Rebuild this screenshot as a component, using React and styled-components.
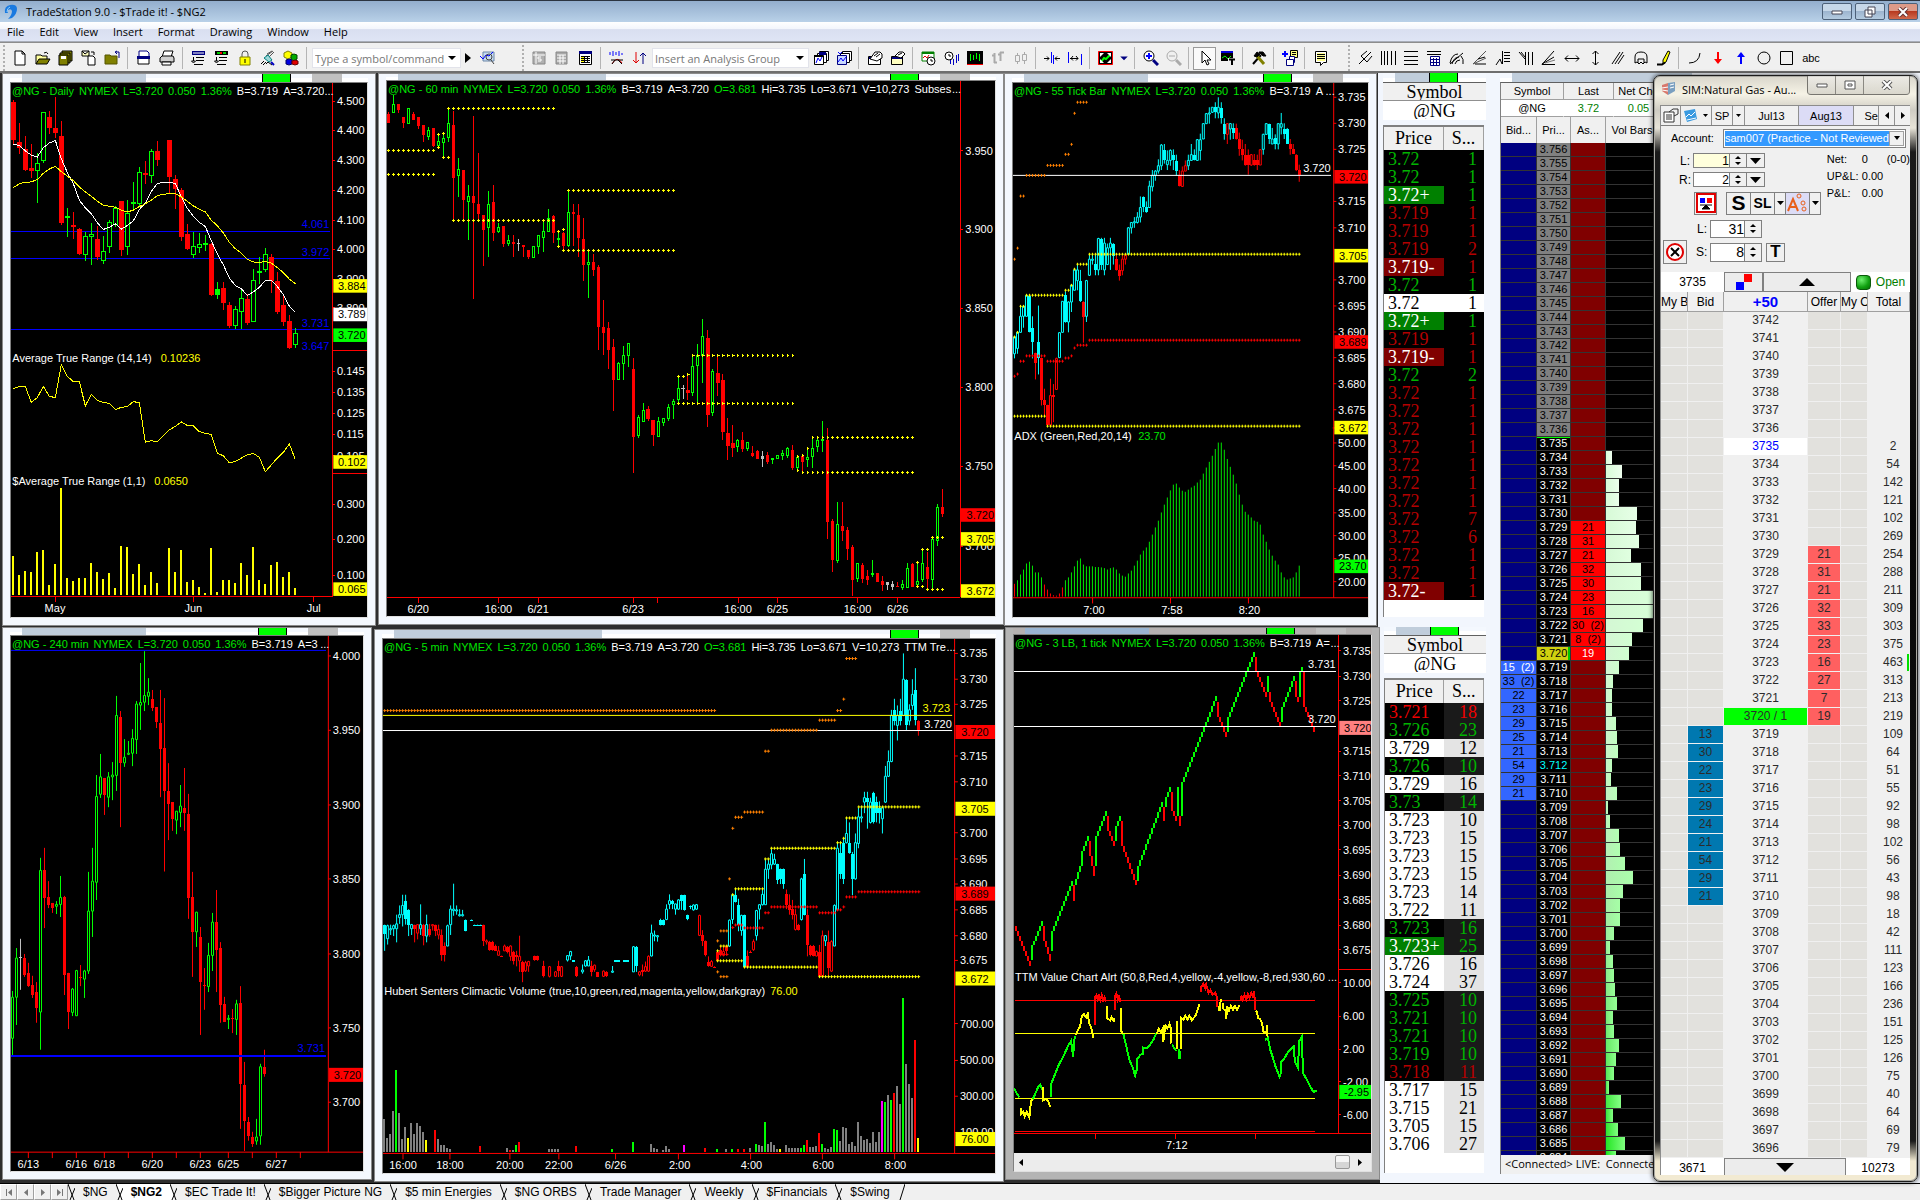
import React from 'react';
import styled, { createGlobalStyle } from 'styled-components';

const GlobalStyle = createGlobalStyle`
  * {
    box-sizing: border-box;
  }

  body {
    margin: 0;
    overflow: hidden;
    background: #f0f0f0;
    font-family: "Liberation Sans", Arial, sans-serif;
    font-size: 11px;
    color: #000;
  }

  button, input, select {
    font-family: inherit;
    font-size: inherit;
    color: inherit;
    margin: 0;
    padding: 0;
    border-radius: 0;
  }

  table {
    border-collapse: separate;
    border-spacing: 0;
    table-layout: fixed;
    width: 100%;
  }

  th, td {
    padding: 0;
    font-weight: normal;
    overflow: hidden;
    white-space: pre;
  }
`;

const Page = styled.div`
  height: 100vh;
  display: flex;
  flex-direction: column;
  position: relative;
`;

/* ---------- title bar and menu ---------- */

const TitleBar = styled.header`
  height: 22px;
  flex: none;
  display: flex;
  align-items: center;
  gap: 8px;
  padding: 0 2px 0 4px;
  border-top: 1px solid #2b3440;
  background: linear-gradient(#93aecd, #b9d1e8);
  font-family: "Open Sans", "Noto Sans", sans-serif;
  font-size: 11px;
`;

const TitleText = styled.h1`
  margin: 0;
  flex: 1;
  font-size: 11px;
  font-weight: normal;
`;

const CaptionButton = styled.button`
  width: 30px;
  height: 17px;
  margin-left: -6px;
  display: flex;
  align-items: center;
  justify-content: center;
  border: 1px solid #4c6078;
  border-radius: 2px;
  background: ${p => (p.$close ? 'linear-gradient(#dd9a88 45%, #b83a20 50%, #d0694c)' : 'linear-gradient(#c6d7e8 45%, #9db5cf 50%, #b4cbe0)')};

  & + & {
    margin-left: -5px;
  }
`;

const MenuBar = styled.nav`
  height: 20px;
  flex: none;
  display: flex;
  gap: 15px;
  padding-left: 7px;
  background: linear-gradient(#fff, #f3f6fc 35%, #d9dff0 40%, #dfe5f5);
  border-bottom: 1px solid #a8adb8;
  font-family: "Open Sans", "Noto Sans", sans-serif;
`;

const MenuItem = styled.button`
  border: 0;
  background: none;
  font-size: 11px;
`;

/* ---------- toolbar ---------- */

const ToolBar = styled.div`
  height: 31px;
  flex: none;
  display: flex;
  align-items: center;
  padding: 2px 0 0 2px;
  background: #f0f0f0;
  border-top: 1px solid #8c8c8c;
  border-bottom: 2px solid #6e6e6e;
`;

const Tool = styled.button`
  width: ${p => (p.$narrow ? '14px' : p.$wide ? '26px' : '23px')};
  height: 23px;
  flex: none;
  display: flex;
  align-items: center;
  justify-content: center;
  border: 1px solid ${p => (p.$active ? '#9a9a9a' : 'transparent')};
  background: ${p => (p.$active ? '#fafafa' : 'none')};
`;

const Sep = styled.span`
  width: 1px;
  height: 22px;
  flex: none;
  margin: 0 4px 0 ${p => (p.$loose ? '4px' : '3px')};
  background: #b4b4b4;
`;

const Grip = styled.span`
  width: 0;
  height: 26px;
  flex: none;
  margin: 0 3px 0 ${p => p.$before || 3}px;
  border-left: 2px dotted #b0b0b0;
`;

const Combo = styled.span`
  width: ${p => p.$width}px;
  height: 20px;
  flex: none;
  margin-left: 1px;
  display: flex;
  align-items: center;
  background: #fff;
  border: 1px solid #e2e3ea;
  color: #777;

  input {
    flex: 1;
    min-width: 0;
    padding-left: 2px;
    border: 0;
    background: none;
    font-family: "Open Sans", "Noto Sans", sans-serif;
  }

  input::placeholder {
    color: #777;
    opacity: 1;
  }
`;

const ICONS = {
  blank: [['M3 1h7l3 3v11h-10z M10 1v3h3', '#fff', '#000']],
  open: [['M1 14V5h5l1 1h5v3', '#ffff9c', '#000'], ['M1 14l3-5h11l-3 5z', '#808000', '#000'], ['M9 3q3-2 4 1', 'none', '#000']],
  saveAll: [['M4 1h10v10h-10z', '#808000', '#000'], ['M2 3h10v10h-10z', '#808000', '#000'], ['M1 5h9v10h-9z', '#808000', '#000'], ['M3 6h5v3h-5z', '#fff', 'none']],
  mail: [['M1 1h7v5h-7z M1 1l3 3 4-3', '#ffffc0', '#000'], ['M7 6h5l2 2v7h-7z', '#fff', '#000'], ['M10 2h3v3', 'none', '#000']],
  folder: [['M1 5h5l1 1h6v8h-12z', '#808000', '#555500'], ['M15 8V2h-3m1-1l-2 1 2 2', 'none', '#000080']],
  printPreview: [['M3 1h8l2 2v6h-10z', '#fff', '#000080'], ['M1 6h13v3h-13z', '#000080', 'none'], ['M2 9v5h11v-5', '#fff', '#000']],
  print: [['M5 1h9l-2 6h-9z', '#fff', '#000'], ['M1 8l2-2h11l1 2v4h-14z', '#d0d0d0', '#000'], ['M3 12h9v3h-9z', '#fff', '#000']],
  rows: [['M1 1h13v4h-13z', '#000080', 'none'], ['M2 3h11', 'none', '#fff'], ['M5 7.5h8 M5 10.5h8 M3 14.5h9 M2.5 7v4h-2l2 2 2-2h-2', 'none', '#000']],
  rowsColor: [['M1 1h13v4h-13z', '#000', 'none'], ['M3 2h3v2h-3z M9 2h3v2h-3z', '#0c0', 'none'], ['M6 2h2v2h-2z', '#f00', 'none'], ['M5 7.5h8 M5 10.5h8 M3 14.5h9 M2.5 7v4h-2l2 2 2-2h-2', 'none', '#000']],
  lock: [['M5 7V4q0-3 3-3t3 3v3', 'none', '#555'], ['M3 7h10v8h-10z', '#ffff00', '#808000'], ['M8 9v4', 'none', '#000']],
  scan: [['M6 6l7-5 M8 8l6-6 M7 4l5-3', 'none', '#555'], ['M1 14l3-3 M3 15l3-3 M6 14l2-2 4 3', 'none', '#000'], ['M4 8l4-3 4 5-3 2z', '#9fd8d8', '#008080'], ['M11 12l3 3', 'none', '#0000c0', 2]],
  cubes: [['M1 3l4-2 4 2v4l-4 2-4-2z', '#ffff00', '#808000'], ['M8 5l3-1 3 1v4l-3 2-3-2z', '#0a0', '#040'], ['M3 10l3-1 3 1v4l-3 1-3-1z', '#0000e0', '#006'], ['M9 11l3-1 3 1v3l-3 1-3-1z', '#e00000', '#600']],
  chartFind: [['M4 11V2h11v9z', '#c8dcf0', '#6a86a8'], ['M1 6l3 3 3-4 3 1 4-4', 'none', '#00f'], ['M7 7a3 3 0 1 0 6 0a3 3 0 1 0-6 0 M12 10l3 4', 'none', '#444']],
  money: [['M2 2h12v12h-12z', '#b0b0b0', '#888'], ['M2 5h12 M5 2v12 M10 7h-3v2h3v2h-3', 'none', '#fff']],
  calc: [['M2 2h11v12h-11z', '#a8a8a8', '#888'], ['M3 5h9 M3 8h9 M3 11h9 M6 5v9 M9 5v9', 'none', '#fff']],
  table: [['M2.5 1.5h12v13h-12z', '#fff', '#000'], ['M2 1h13v3h-13z', '#000080', 'none'], ['M4 6h3v7h-3z', '#ffff00', 'none'], ['M4 6.5h9 M4 8.5h9 M4 10.5h9 M4 12.5h9 M7.5 6v7 M10.5 6v7', 'none', '#000']],
  analysis: [['M1 5V2 M4 6V1 M7 5V2 M10 6V1 M13 5V3', 'none', '#00f'], ['M3 14q5-9 10-1', 'none', '#e00000'], ['M2 10l12 0 M3 14l3-4 M9 10l4 4', 'none', '#000']],
  updown: [['M4 2v11m-3-3l3 3 3-3', 'none', '#e00000'], ['M11 14V3m-3 3l3-3 3 3', 'none', '#000080']],
  dice: [['M6.5 1.5h9v9h-9z', '#fff', '#000'], ['M4.5 3.5h9v9h-9z', '#fff', '#000'], ['M1.5 5.5h9v9h-9z', '#fff', '#000'], ['M3 13l2-5 2 3 2-4', 'none', '#00f'], ['M6 2h7v3h-7z', '#000080', 'none'], ['M1 5h9v2h-9z', '#000', 'none']],
  sheets: [['M6.5 1.5h9v9h-9z', '#fff', '#000'], ['M4.5 3.5h9v9h-9z', '#fff', '#000'], ['M1.5 5.5h9v9h-9z', '#c9d8ff', '#000080'], ['M2 12l3-4 2 3 3-4', 'none', '#00f'], ['M2 2l2 2 2-2', 'none', '#00f']],
  hand: [['M1.5 6.5h12v8h-12z', '#fff', '#000'], ['M2 7h11v2h-11z', '#000080', 'none'], ['M3 9l5-7h5l2 2v4l-5 3z', '#fff', '#000'], ['M7 6l4-3 M9 7l4-3', 'none', '#000']],
  handBook: [['M1.5 6.5h11v8h-11z', '#ffffc0', '#000'], ['M2 7h10v2h-10z', '#000080', 'none'], ['M5 6l4-4h4l2 2-4 4z', '#fff', '#000'], ['M8 5l4-2', 'none', '#000']],
  chartClock: [['M1 2h12v9h-12z', '#fff', '#008000'], ['M1 2h12v2h-12z', '#008000', 'none'], ['M2 8l2-2 2 2 2-3', 'none', '#e00000'], ['M6 11a4 4 0 1 0 8 0a4 4 0 1 0-8 0', '#fff', '#000'], ['M10 9v2h2', 'none', '#000']],
  clockWave: [['M1 6a4 4 0 1 0 8 0a4 4 0 1 0-8 0 M5 4v2h2', '#fff', '#000'], ['M6.5 14V10 M9.5 15V9 M12.5 13V5 M14.5 11V4', 'none', '#0000c0']],
  bars: [['M0 1h16v13h-16z', '#000', 'none'], ['M3.5 4v7 M6.5 5v5 M9.5 3v6 M12.5 4v7', 'none', '#00ff00'], ['M0 14.5h16', 'none', '#f00']],
  greyBars: [['M4.5 3v10 M4 5.5h-2 M4 12.5h3 M10.5 2v9 M10 4.5h-2 M10 2.5h4', 'none', '#aaa', 2]],
  greyCandles: [['M4.5 3v11 M11.5 2v12', 'none', '#aaa'], ['M2.5 5.5h4v6h-4z M9.5 4.5h4v6h-4z', '#f0f0f0', '#aaa']],
  squeeze: [['M0 8.5h5m-2-2l2 2-2 2 M16 8.5h-5m2-2l-2 2 2 2', 'none', '#000'], ['M7.5 2v11 M9.5 5v9', 'none', '#00f']],
  widen: [['M3 8.5h8 M6 6l-2 2.5 2 2 M9 6l2 2.5-2 2', 'none', '#000'], ['M1.5 2v11 M14.5 4v11', 'none', '#00f']],
  move: [['M0.5 1.5h14v13h-14z', '#000', '#f00'], ['M3 12l3-4 2 1 4-4', 'none', '#0f0', 2], ['M2 3h4l-4 4z M13 3v4l-4-4z M2 13v-4l4 4z M13 13h-4l4-4z', '#fff', 'none']],
  zoomIn: [['M1 6a5 5 0 1 0 10 0a5 5 0 1 0-10 0', '#fff', '#000'], ['M6 3v6 M3 6h6', 'none', '#00f', 2], ['M10 10l5 5', 'none', '#000080', 3]],
  zoomOut: [['M1 6a5 5 0 1 0 10 0a5 5 0 1 0-10 0 M3 6h6', 'none', '#aaa'], ['M10 10l5 5', 'none', '#aaa', 3]],
  pointer: [['M5 1v12l3-3 2 5 2-1-2-4h4z', '#fff', '#000']],
  textChart: [['M1 2h12v9h-12z', '#000', 'none'], ['M1 1h12v2h-12z', '#0000e0', 'none'], ['M2 8l3-2 3 3 3-3', 'none', '#0f0'], ['M8 8h8v7h-8z', '#f0f0f0', 'none'], ['M9 9.5h6 M12 9v6', 'none', '#000', 2]],
  hammers: [['M2 14l8-9', 'none', '#000', 2], ['M13 14L6 6', 'none', '#808000', 3], ['M8 2h4l3 4-3 0z M3 6l3-4 3 2-3 3z', '#000', '#000']],
  plusSheets: [['M0 4h6 M3 1v6', 'none', '#00f', 2], ['M8.5 0.5h7v7h-7z', '#ffff80', '#000'], ['M10 2.5h4 M10 4.5h4', 'none', '#000'], ['M7.5 6.5h5v6h-5z', '#fff', '#000080'], ['M4.5 9.5h7v6h-7z', '#fff', '#000080']],
  note: [['M2.5 1.5h11v11h-3l-3 3v-3h-5z', '#fff', '#000'], ['M4 3h8v8h-8z', '#ffff90', 'none'], ['M4 4.5h8 M4 6.5h8 M4 8.5h8', 'none', '#000']],
  pitchfork: [['M2 14l5-5 M4 6l6 6 M4 6l6-5 M7 9l7-7 M10 12l5-6', 'none', '#000']],
  vlines: [['M1.5 1v14 M4.5 1v14 M7.5 1v14 M11.5 1v14 M15.5 1v14', 'none', '#000']],
  hlines: [['M1 1.5h14 M1 6.5h14 M1 10.5h14 M1 14.5h14', 'none', '#000']],
  fibBox: [['M1 1.5h14 M1 4.5h14', 'none', '#000'], ['M4.5 6.5h9v9h-9z', '#fff', '#000080'], ['M5 9.5h8 M5 12.5h8 M7.5 8v7 M10.5 8v7', 'none', '#000080']],
  arcs: [['M1 13q2-9 8-9 M3 14q2-7 7-7 M6 14q1-4 5-4 M1 14l13-11 M12 6q3 3 2 8', 'none', '#000']],
  fan: [['M1 14L14 1 M1 14l13-6', 'none', '#555'], ['M3 14h11 M6 9l7-2', 'none', '#000']],
  fanLines: [['M1 15l4-6 2 5 M7.5 1v13', 'none', '#000'], ['M9 2.5h6 M9 5.5h6 M9 8.5h6 M9 11.5h6', 'none', '#000']],
  timeLines: [['M1 2l6 7 M7.5 2v13 M10.5 2v13 M14.5 2v13 M3 2l4 5', 'none', '#000']],
  angle: [['M1 14.5L13 1 M1 14.5h13 M1 14l12-7', 'none', '#000'], ['M4 13l10-3', 'none', '#777']],
  hArrow: [['M1 8.5h14 M4 5.5l-3 3 3 3 M12 5.5l3 3-3 3', 'none', '#000']],
  vArrow: [['M8.5 1v14 M5.5 4l3-3 3 3 M5.5 12l3 3 3-3', 'none', '#000']],
  parallel: [['M2 14L10 2 M5 14L13 2 M8 14l6-9', 'none', '#000']],
  head: [['M2 13V7q0-5 6-5t6 5v6l-2-1-2 2-2-2-2 2-2-2z M5 13V9h6v4', 'none', '#000']],
  pencil: [['M7 10L12 1l2 1-4 10-3 2z', '#ffff00', '#000'], ['M1 14.5h5l3-2', 'none', '#000', 2]],
  arc: [['M2 13q10 0 11-10', 'none', '#000']],
  down: [['M8 2v9', 'none', '#f00', 2], ['M4 9h8l-4 5z', '#f00', 'none']],
  up: [['M8 14V6', 'none', '#00f', 2], ['M4 7h8l-4-5z', '#00f', 'none']],
  ellipse: [['M2 8a6 6 0 1 0 12 0a6 6 0 1 0-12 0', 'none', '#000']],
  rect: [['M1.5 1.5h12v13h-12z', 'none', '#000']],
  caret: [['M4 6h8l-4 4z', '#000', 'none']],
  caretBlue: [['M3 6h10l-5 5z', '#000080', 'none']],
  play: [['M5 3v10l6-5z', '#000', 'none']],
};

const Icon = ({ name, size = 16 }) => (
  <svg width={size} height={size} viewBox="0 0 16 16" aria-hidden="true" style={{ flex: 'none' }}>
    {ICONS[name].map(([d, fill, stroke, w], i) => (
      <path key={i} d={d} fill={fill} stroke={stroke} strokeWidth={w || 1} />
    ))}
  </svg>
);

const TOOL_GROUPS_LEFT = ['blank open saveAll mail folder', 'printPreview print', 'rows rowsColor lock scan cubes'];
const TOOL_GROUPS_MID = [
  'dice sheets', 'hand handBook', 'chartClock clockWave bars greyBars greyCandles', 'squeeze widen',
  'move caretBlue', 'zoomIn zoomOut', 'pointer textChart', 'hammers', 'plusSheets', 'note',
];
const DRAWING_TOOLS = [
  'pitchfork vlines hlines fibBox arcs fan fanLines timeLines angle hArrow vArrow parallel head pencil',
  'arc down up ellipse rect',
];

const ToolGroup = ({ names }) => names.split(' ').map(n => (
  <Tool key={n} aria-label={n} $narrow={n === 'caretBlue'} $active={n === 'pointer'}>
    <Icon name={n} size={n === 'caretBlue' ? 12 : 16} />
  </Tool>
));

const Toolbar = () => (
  <ToolBar>
    <Grip $before={1} />
    {TOOL_GROUPS_LEFT.map(g => <React.Fragment key={g}><ToolGroup names={g} /><Sep $loose /></React.Fragment>)}
    <Combo $width={149}>
      <input aria-label="Symbol or command" placeholder="Type a symbol/command" />
      <Icon name="caret" />
    </Combo>
    <Tool $narrow aria-label="Run"><Icon name="play" /></Tool>
    <ToolGroup names="chartFind" />
    <Grip $before={24} />
    <ToolGroup names="money calc table" />
    <Sep $loose />
    <ToolGroup names="analysis updown" />
    <Combo $width={157}>
      <input aria-label="Analysis group" placeholder="Insert an Analysis Group" />
      <Icon name="caret" />
    </Combo>
    {TOOL_GROUPS_MID.map((g, i) => (
      <React.Fragment key={g}>{i > 0 && <Sep />}<ToolGroup names={g} /></React.Fragment>
    ))}
    <Grip $before={16} />
    <ToolGroup names={DRAWING_TOOLS[0]} />
    <Sep />
    <ToolGroup names={DRAWING_TOOLS[1]} />
    <Tool $wide>abc</Tool>
  </ToolBar>
);

/* ---------- child windows ---------- */

const Workspace = styled.main`
  flex: 1;
  min-height: 0;
  display: grid;
  grid-template-columns: minmax(0, 1fr) 428px;
  background: #2e2e2e;
`;

const Rows = styled.div`
  min-height: 0;
  display: grid;
  grid-template-rows: minmax(0, 554fr) minmax(0, 556fr);
`;

const WindowRow = styled.div`
  min-height: 0;
  display: grid;
  grid-template-rows: minmax(0, 1fr);
  grid-template-columns: ${p => p.$columns};
`;

const Frame = styled.section`
  min-width: 0;
  min-height: 0;
  margin: ${p => p.$margin || '0'};
  display: flex;
  flex-direction: column;
  padding: 0 7px 7px;
  border: 1px solid #8a8a8a;
  background: ${p => (p.$active ? '#b4b4b4' : '#f4f8fe')};
`;

const Strip = styled.div`
  height: ${p => p.$height}px;
  flex: none;
  display: flex;
  padding-left: 12px;
  background: ${p => (p.$active ? '#b4b0b0' : 'linear-gradient(#f4f8fe 50%, #fff 50%)')};
`;

const StripPart = styled.i`
  width: ${p => p.$w}px;
  flex: ${p => (p.$grow ? 1 : 'none')};
  background: ${p => p.$color || 'transparent'};
  border: solid #000;
  border-width: ${p => (p.$edged ? '0 1px' : '0')};
`;

const Well = styled.div`
  flex: 1;
  min-height: 0;
  display: flex;
  flex-direction: column;
  position: relative;
  border: 1px solid;
  border-color: #808080 #e0e0e0 #e0e0e0 #808080;
  background: ${p => p.$bg || '#000'};
  overflow: hidden;
`;

const ChartWindow = ({ margin, strip = 8, active, caption = 124, children }) => (
  <Frame $margin={margin} $active={active}>
    <Strip $height={strip} $active={active}>
      <StripPart $w={caption} $color={active ? '#99b4d1' : '#c0cddb'} />
      <StripPart $grow />
      <StripPart $w={29} $color="#00ff00" $edged />
      <StripPart $w={21} />
      <StripPart $w={30} $color="#c0c0c0" />
      <StripPart $w={26} />
    </Strip>
    <Well>{children}</Well>
  </Frame>
);

/* ---------- charts ---------- */

const Canvas = styled.svg`
  flex: 1;
  width: 100%;
  min-height: 0;
  display: block;

  path, line, polyline {
    vector-effect: non-scaling-stroke;
    fill: none;
    shape-rendering: crispEdges;
  }

  text {
    font-size: 11px;
    fill: #fff;
  }
`;

const ChartHeader = styled.div`
  position: absolute;
  top: 1px;
  left: 1px;
  width: ${p => p.$width}%;
  display: flex;
  line-height: 15px;
  white-space: nowrap;
  color: #fff;
`;

const HeaderItems = styled.div`
  flex: 0 1 auto;
  display: flex;
  gap: 5px;
  padding-right: 3px;
  overflow: hidden;
`;

const HeaderItem = styled.span`
  color: ${p => (p.$green ? '#00e400' : '#fff')};
`;

const RED = '#ff0000';
const LIME = '#00ff00';
const CYAN = '#00ffff';
const YELLOW = '#ffff00';
const ORANGE = '#ff8000';
const BLUE = '#0000ff';

const CANDLE_COLORS = { g: LIME, G: LIME, r: RED, h: RED, w: '#c0c0c0', c: CYAN, C: CYAN };
const HOLLOW = 'ghc';

// "hi top bottom low kind", one entry per bar
const parseCandles = (text, x0, step) => text.trim().split(/\s*,\s*/).map((row, i) => {
  const f = row.split(' ');
  const slot = f.length === 6 ? Math.round((Number(f.shift()) - x0) / step) : i;
  return { x: x0 + slot * step, hi: +f[0], top: +f[1], bot: Math.max(+f[2], +f[1] + 3), lo: +f[3], kind: f[4] };
}).filter(c => c.kind);

const Candles = ({ data, width, hollowWidth }) => data.map((c, i) => {
  const color = CANDLE_COLORS[c.kind];
  const hollow = HOLLOW.includes(c.kind);
  const w = hollow ? hollowWidth : width;
  return (
    <React.Fragment key={i}>
      <path d={`M${c.x} ${c.hi}V${c.lo}`} stroke={color} />
      <rect
        x={c.x - w / 2}
        y={c.top}
        width={w}
        height={c.bot - c.top}
        fill={hollow ? '#000' : color}
        stroke={hollow ? color : 'none'}
        vectorEffect="non-scaling-stroke"
        shapeRendering="crispEdges"
      />
    </React.Fragment>
  );
});

const Dots = ({ runs, x0 = 0, step, color }) => (
  <path
    stroke={color}
    d={runs.map(([a, b, y]) => {
      let d = '';
      for (let x = x0 + a; x <= x0 + b + 1; x += step) d += `M${x - 3} ${y}h7M${x} ${y - 4}v8`;
      return d;
    }).join('')}
  />
);

const series = (ys, x0, step) => ys.trim().split(' ').map((y, i) => `${x0 + i * step},${y}`).join(' ');

const BAR_COLORS = { g: LIME, r: RED, y: YELLOW, m: '#ff00ff', d: '#808080' };

// "top[colour][*count]" entries, "-" leaves a gap
const Bars = ({ text, x0, step, base, color, width = 1 }) => {
  const tops = text.trim().split(' ').flatMap(t => {
    const [v, n] = t.split('*');
    return Array(Number(n || 1)).fill(v);
  });
  return tops.map((t, i) => (t === '-' ? null : (
    <path key={i} d={`M${x0 + i * step} ${base}V${parseInt(t, 10)}`} stroke={BAR_COLORS[t.slice(-1)] || color} strokeWidth={width} />
  )));
};

const Chart = ({ view, axis, floor, scale = [], tags = [], times = [], ticks = [], notes = [], splits = [], header, floorTo, children }) => {
  const [vx, vy, vw, vh] = view;
  const px = x => `${((x - vx) / vw) * 100}%`;
  const py = y => `${((y - vy) / vh) * 100}%`;
  const right = vx + vw;
  return (
    <>
      <Canvas width="100%" height="100%">
        <svg viewBox={view.join(' ')} preserveAspectRatio="none" width="100%" height="100%">
          {children}
          <path stroke={RED} strokeWidth="1" d={`M${axis} ${vy}V${floor}M${vx} ${floor}H${floorTo || axis}`} />
          <path stroke={RED} d={scale.map(([, y]) => `M${axis} ${y}h8`).join('') + splits.map(y => `M${axis - 3} ${y}H${right}`).join('')} />
          <path stroke={RED} d={ticks.map(x => `M${x} ${floor}v${16}`).join('')} />
        </svg>
        {scale.map(([t, y]) => <text key={t} x={px(axis + 13)} y={py(y)} dy="4">{t}</text>)}
        <svg viewBox={view.join(' ')} preserveAspectRatio="none" width="100%" height="100%">
          {tags.map(([t, y, c]) => <rect key={t} x={axis + 2} y={y - 19} width={right - axis} height="38" fill={c} />)}
        </svg>
        {tags.map(([t, y]) => <text key={t} x={px(axis + 16)} y={py(y)} dy="4" style={{ fill: '#000' }}>{t}</text>)}
        {times.map(([t, x, y]) => <text key={t + x} x={px(x)} y={py(y)} dy="4" textAnchor="middle">{t}</text>)}
        {notes.map(([t, x, y, c, a]) => <text key={t + y} x={px(x)} y={py(y)} dy="4" textAnchor={a} style={{ fill: c }}>{t}</text>)}
      </Canvas>
      <ChartHeader $width={((axis - vx) / vw) * 100}>
        <HeaderItems>
          {header.split('  ').map((t, i) => <HeaderItem key={t} $green={i < 5 || t.startsWith('O=')}>{t}</HeaderItem>)}
        </HeaderItems>
        <span>...</span>
      </ChartHeader>
    </>
  );
};

const scaleOf = (text) => text.trim().split(' ').map(p => p.split('@')).map(([t, y]) => [t, +y]);

const DAILY = `
84 90 195 208 r, 148 202 217 235 r, 184 221 279 283 r, 207 274 283 301 r, 233 261 281 372 g, 118 119 254 260 g,
115 132 162 179 r, 76 162 176 190 r, 142 185 427 434 r, 386 410 412 467 g, 398 434 440 473 r, 441 445 515 518 r,
452 466 517 535 g, 428 460 466 546 g, 437 473 523 531 r, 465 508 534 543 g, 420 426 494 513 g, 381 388 433 440 g,
367 367 503 520 r, 364 402 494 518 g, 313 371 373 389 g, 271 287 373 381 g, 254 288 293 319 r, 220 228 296 316 g,
198 227 251 269 r, -, 195 196 299 345 r, 293 305 333 389 r, 330 336 468 479 r, 431 459 501 504 r, 454 493 517 527 g,
456 488 497 513 g, 462 485 487 507 g, 484 487 629 633 r, 593 613 629 641 G, 593 610 651 672 r, 649 658 716 722 r,
661 670 716 726 g, 612 640 676 726 g, 626 641 707 713 r, 558 589 704 706 g, 524 564 566 599 g, 498 516 559 566 g,
515 524 590 624 r, 566 591 678 683 r, 631 658 706 717 r, 686 703 778 782 r, 722 737 769 778 g`;
const DAILY_FAST = '207 211 226 238 243 217 204 197 248 287 318 364 386 402 427 446 440 430 445 435 422 390 372 340 317 315 314 317 355 387 409 426 438 478 515 545 582 603 612 631 621 608 589 589 606 628 661 678';
const DAILY_SLOW = '329 318 314 313 306 289 277 269 284 297 309 327 341 353 367 378 381 384 392 397 392 382 374 364 351 348 345 346 355 367 380 389 397 420 436 456 482 500 512 530 537 538 536 540 553 567 585 598';
const DAILY_ATR = '891 886 886 930 917 885 913 917 824 857 872 872 940 907 925 930 933 950 944 942 928 931 1042 1037 1041 1024 1007 997 985 995 996 1012 1017 1020 1072 1080 1099 1096 1086 1077 1073 1084 1124 1105 1086 1070 1047 1090';
const DAILY_RANGE = '1361 1414 1403 1406 1350 1344 1442 1383 1170 1422 1431 1422 1422 1380 1406 1425 1408 1450 1333 1336 1411 1383 1442 1406 1436 - 1338 1406 1344 1434 1428 1448 1464 1338 1462 1428 1428 1436 1380 1414 1336 1428 1439 1386 1378 1420 1406 1450';

const DailyChart = () => (
  <Chart
    view={[33, 36, 1068, 1495]}
    axis={998}
    floor={1474}
    splits={[785, 1129]}
    header="@NG - Daily  NYMEX  L=3.720  0.050  1.36%  B=3.719  A=3.720"
    scale={scaleOf('4.500@87 4.400@168 4.300@252 4.200@336 4.100@420 4.000@501 3.900@585 3.800@665 0.145@843 0.135@902 0.125@961 0.115@1020 0.105@1079 0.300@1216 0.200@1313 0.100@1414')}
    tags={[['3.884', 604, YELLOW], ['3.789', 684, '#fff'], ['3.720', 742, LIME], ['0.102', 1097, YELLOW], ['0.065', 1453, YELLOW]]}
    times={[['May', 165, 1507], ['Jun', 580, 1507], ['Jul', 941, 1507]]}
    ticks={[166, 580, 941]}
    notes={[
      ['4.061', 988, 432, BLUE, 'end'], ['3.972', 988, 508, BLUE, 'end'], ['3.731', 988, 707, BLUE, 'end'],
      ['3.647', 988, 772, BLUE, 'end'],
      ['Average True Range (14,14)', 37, 807, '#fff'], ['0.10236', 482, 807, YELLOW],
      ['$Average True Range (1,1)', 37, 1151, '#fff'], ['0.0650', 463, 1151, YELLOW],
    ]}
  >
    <path stroke={BLUE} d="M33 452H990M33 527H990M33 726H990" />
    <Candles data={parseCandles(DAILY, 40.5, 18)} width={15} hollowWidth={12} />
    <polyline points={series(DAILY_FAST, 40, 18)} stroke="#fff" />
    <polyline points={series(DAILY_SLOW, 40, 18)} stroke={YELLOW} />
    <polyline points={series(DAILY_ATR, 40, 18)} stroke={YELLOW} />
    <Bars text={DAILY_RANGE} x0={39} step={18} base={1470} color={YELLOW} width={2} />
  </Chart>
);

const HOURLY = `
118 123 148 148 r, 68 96 118 120 g, 95 95 112 119 r, 132 132 147 161 r, 106 108 150 150 g, 116 123 140 140 r,
130 130 157 164 r, 154 154 181 201 r, 160 169 186 194 g, 161 163 212 214 r, 182 200 211 216 g, 178 192 203 245 g,
107 149 187 201 g, 115 154 301 420 r, 246 278 296 355 g, 278 278 364 420 r, 322 353 369 475 g, 129 353 371 641 r,
232 375 403 420 r, 406 406 447 548 r, 339 376 441 524 g, 322 370 455 479 r, 428 441 452 455 g, 437 437 487 494 r,
462 478 486 492 g, 462 482 486 523 r, 473 484 486 506 w, 490 490 495 524 r, 504 504 524 530 r, 493 493 525 525 g,
461 463 494 515 g, 421 452 469 510 g, 389 415 451 453 g, 406 409 455 483 r, 452 470 472 495 g, 452 455 493 500 r,
338 398 491 494 g, 376 398 402 492 r, 375 406 469 523 r, 413 473 545 590 r, 500 538 545 637 g, 516 538 559 576 r,
545 552 720 783 r, 644 720 735 797 r, 706 722 783 837 r, 753 776 867 955 r, 818 821 866 867 g, 773 800 822 868 g,
764 766 800 832 g, 806 837 1027 1128 r, 966 972 1022 1030 g, 932 953 985 986 g, 941 950 976 984 r, 980 980 1021 1053 r,
972 984 1027 1027 g, 974 975 986 998 g, 935 944 976 983 g, 921 928 937 977 g, 858 891 922 936 g, 882 890 892 921 w,
852 896 904 924 r, 800 829 903 912 g, 767 800 828 933 g, 697 746 800 876 g, 728 750 966 1000 r, 838 844 960 968 g,
800 849 876 912 r, 851 868 1013 1035 r, 974 1016 1053 1092 r, 993 1045 1057 1084 r, 1032 1037 1053 1070 g,
1014 1036 1060 1070 r, 1042 1043 1060 1068 g, 1052 1072 1081 1084 r, 1065 1067 1089 1089 r, 1066 1082 1088 1112 w,
1070 1078 1097 1103 r, 1086 1087 1091 1103 g, 1078 1079 1087 1089 g, 1064 1073 1078 1091 g, 1056 1059 1079 1087 g,
1050 1064 1113 1119 r, 1081 1084 1112 1122 g, 1078 1082 1097 1126 r, 1060 1085 1091 1112 g, 1030 1059 1083 1114 g,
1030 1036 1055 1070 g, 983 1034 1036 1070 g, 1002 1035 1266 1312 r, 1256 1264 1372 1406 r, 1210 1272 1374 1381 g,
1210 1277 1290 1320 r, 1279 1288 1340 1372 r, 1330 1337 1428 1473 r, 1380 1382 1423 1434 g, 1380 1386 1425 1437 r,
1400 1417 1427 1443 r, 1372 1409 1413 1420 g, 1408 1408 1433 1435 r, 1417 1431 1441 1459 r, 1434 1434 1441 1455 w,
1430 1440 1448 1455 w, 1434 1445 1449 1449 r, 1427 1440 1448 1455 g, 1380 1395 1448 1449 g, 1380 1382 1447 1447 r,
1378 1432 1442 1448 g, 1343 1382 1427 1434 g, 1350 1392 1425 1455 r, 1309 1316 1427 1455 g, 1215 1225 1318 1333 g,
1172 1224 1242 1252 r`;

const HOUR_STEP = 12.45;
const HOURLY_LEVELS = [
  [0, 9, 225], [0, 9, 292], [10, 10, 181], [11, 11, 178], [10, 10, 216], [11, 12, 245], [12, 33, 107], [13, 33, 421],
  [34, 34, 452], [35, 35, 447], [34, 34, 494], [36, 57, 338], [35, 57, 505], [58, 59, 858], [60, 60, 852], [61, 81, 799],
  [58, 81, 933], [82, 82, 1081], [83, 83, 1080], [84, 84, 1060], [85, 105, 1029], [82, 82, 1121], [83, 105, 1127],
  [106, 106, 1378], [107, 108, 1343], [109, 111, 1309], [106, 107, 1446], [108, 111, 1454],
].map(([a, b, y]) => [a * HOUR_STEP, b * HOUR_STEP, y]);

const HourChart = () => (
  <Chart
    view={[29, 30, 1517, 1499]}
    axis={1459}
    floor={1476}
    header="@NG - 60 min  NYMEX  L=3.720  0.050  1.36%  B=3.719  A=3.720  O=3.681  Hi=3.735  Lo=3.671  V=10,273  Subses"
    scale={scaleOf('3.950@225 3.900@446 3.850@667 3.800@888 3.750@1109 3.700@1334')}
    tags={[['3.720', 1246, RED], ['3.705', 1313, YELLOW], ['3.672', 1459, YELLOW]]}
    times={[['6/20', 107], ['16:00', 307], ['6/21', 406], ['6/23', 643], ['16:00', 905], ['6/25', 1003], ['16:00', 1203], ['6/26', 1303]].map(t => [...t, 1510])}
    ticks={[107, 307, 406, 643, 705, 905, 1003, 1203, 1303]}
  >
    <Candles data={parseCandles(HOURLY, 33, HOUR_STEP)} width={8} hollowWidth={5} />
    <Dots runs={HOURLY_LEVELS} x0={33} step={HOUR_STEP} color={YELLOW} />
  </Chart>
);

const TICKS55 = `
745 748 795 808 c, 735 735 780 795 c, 660 690 735 735 c, 660 662 690 722 c, 630 632 690 690 c, 632 632 735 735 C,
690 722 762 808 C, 792 793 822 867 r, 660 762 808 853 C, 806 806 925 940 r, 893 925 940 968 r, 938 938 995 997 r,
865 912 995 997 h, 880 912 912 987 r, 806 808 895 895 h, 735 736 806 806 c, 648 648 735 735 c, 620 630 706 708 C,
648 650 706 735 c, 600 603 650 678 c, 555 560 617 617 c, 545 560 590 617 c, 560 590 648 650 C, 648 650 692 764 r,
588 590 690 706 c, 516 530 575 577 c, 516 530 530 545 c, 516 543 560 575 C, 470 472 560 575 c, 470 472 547 560 C,
470 485 560 575 c, 486 498 545 545 c, 470 485 498 560 c, 485 486 520 545 C, 520 530 560 562 r, 545 560 576 590 r,
520 530 562 575 h, 516 518 530 545 h, 440 442 516 516 c, 427 427 442 458 c, 412 425 427 442 c, 398 412 427 430 c,
354 385 412 427 c, 354 355 385 398 C, 368 385 398 400 C, 310 325 385 385 c, 280 295 327 340 c, 280 283 295 310 c,
250 268 283 290 c, 207 210 268 280 c, 207 225 253 262 C, 225 253 265 280 c, 222 225 253 268 c, 222 237 253 280 C,
237 256 282 295 C, 280 295 326 326 r, 270 283 326 326 h, 253 268 283 283 h, 237 253 268 280 c, 207 237 253 253 c,
222 237 253 253 C, 193 195 253 253 c, 178 195 225 253 c, 149 150 193 193 c, 120 122 150 150 c, 104 120 122 150 c,
104 104 118 120 c, 90 104 118 135 C, 76 104 120 135 c, 90 105 135 150 C, 135 150 180 195 C, 150 150 180 207 h,
149 150 165 195 c, 149 162 175 193 C, 150 162 193 195 r, 175 193 222 240 r, 195 222 237 253 r, 207 237 266 268 r,
222 237 266 293 r, 235 237 266 268 h, 235 253 266 268 r, 237 253 266 280 r, 222 223 266 266 h, 178 180 222 237 c,
149 150 180 180 c, 150 150 193 207 C, 162 193 207 207 c, 180 190 207 222 C, 150 150 207 222 c, 120 150 160 180 c,
149 165 180 193 C, 162 165 207 207 C, 193 207 222 237 r, 207 222 235 235 r, 235 237 280 283 r, 265 280 293 313 r`;
const ADX = '1440r 1430 1414 1400 1383 1378 1389 1408 1408 1422 1442r 1456r 1467r 1472r 1473r 1467r 1450r 1430 1422 1408 1391 1375 1369 1386 1391 1391 1391 1393 1393 1394 1396 1400 1396 1394 1400 1411 1417 1420 1411 1403 1389 1375 1358 1347 1338 1322 1302 1282 1263 1240 1218 1198 1178 1162 1159 1170 1179 1182 1176 1170 1165 1156 1148 1131 1114 1098 1081 1062 1044 1044 1064 1090 1112 1134 1159 1190 1218 1238 1246 1254 1263 1266 1274 1302 1322 1344 1361 1375 1386 1408 1422 1428 1425 1422 1408 1389';
const at9 = runs => runs.map(([a, b, y]) => [a * 9, b * 9, y]);

const TickChart = () => (
  <Chart
    view={[38, 36, 1066, 1497]}
    axis={1001}
    floor={1479}
    floorTo={1104}
    splits={[1003]}
    header="@NG - 55 Tick Bar  NYMEX  L=3.720  0.050  1.36%  B=3.719  A"
    scale={scaleOf('3.735@76 3.730@149 3.725@222 3.715@368 3.710@442 3.700@588 3.695@661 3.690@734 3.685@806 3.680@879 3.675@952 50.00@1045 45.00@1109 40.00@1173 35.00@1241 30.00@1305 25.00@1369 20.00@1434')}
    tags={[['3.720', 299, RED], ['3.705', 520, YELLOW], ['3.689', 762, RED], ['3.672', 1002, YELLOW], ['23.70', 1391, LIME]]}
    times={[['7:00', 281, 1512], ['7:58', 515, 1512], ['8:20', 748, 1512]]}
    ticks={[277, 511, 745]}
    notes={[['3.720', 992, 275, '#fff', 'end'], ['ADX (Green,Red,20,14)', 42, 1025, '#fff'], ['23.70', 414, 1025, '#00e400']]}
  >
    <Candles data={parseCandles(TICKS55, 42.5, 9)} width={9} hollowWidth={6} />
    <path stroke="#fff" d="M38 295H993" />
    <Dots x0={42.5} step={9} color={ORANGE} runs={at9([[0, 0, 530], [1, 1, 499], [2, 3, 353], [4, 10, 295], [11, 16, 267], [17, 18, 236], [19, 19, 208], [20, 20, 121], [21, 24, 90]])} />
    <Dots x0={42.5} step={9} color={YELLOW} runs={at9([[0, 0, 748], [1, 1, 735], [2, 3, 662], [4, 16, 631], [17, 18, 617], [19, 19, 603], [20, 20, 558], [21, 24, 544], [25, 95, 516], [0, 10, 970], [11, 95, 998]])} />
    <Dots x0={42.5} step={9} color={RED} runs={at9([[0, 0, 858], [1, 1, 852], [2, 3, 816], [4, 10, 801], [11, 16, 816], [17, 18, 807], [19, 19, 801], [20, 20, 779], [21, 24, 771], [25, 95, 757]])} />
    <Bars text={ADX} x0={42.5} step={9} base={1476} color="#00e400" />
  </Chart>
);

const FOUR_HOUR = `
1003 1020 1131 1177 g, 887 914 1020 1095 g, 862 912 915 1000 w, 903 914 960 965 r, 927 954 989 992 r,
962 986 1014 1022 r, 979 1006 1048 1089 r, 643 677 1060 1162 g, 616 676 751 833 r, 706 749 770 779 r,
765 765 779 792 r, 760 769 774 795 g, 692 750 769 803 g, 746 749 960 1014 r, 954 954 1061 1106 r,
995 998 1061 1071 g, 946 948 1070 1071 g, 933 965 968 990 r, 946 949 971 1022 g, 681 787 949 957 g,
616 706 787 857 g, 419 477 709 757 g, 362 424 471 481 g, 427 427 473 527 r, 411 424 479 506 g, 384 419 424 487 g,
205 258 420 462 g, 246 262 387 560 r, 322 371 386 397 g, 327 360 362 365 g, 295 320 360 395 g, 219 227 323 362 g,
116 223 230 297 g, 84 204 222 246 g, 157 195 206 230 g, 189 214 238 246 r, 235 235 276 292 r, 189 278 349 479 r,
211 346 462 680 r, 387 462 497 595 r, 492 492 538 570 r, 516 517 541 579 g, 446 503 520 560 g, 400 508 522 570 r,
470 524 752 808 r, 681 749 843 965 r, 789 790 843 884 g, 830 857 980 1122 r, 941 987 990 1054 r, 873 907 991 1006 g,
792 817 907 949 g, 730 816 892 1006 r, 871 887 1040 1089 r, 1019 1038 1087 1087 r, 1068 1077 1079 1106 g,
1052 1077 1079 1117 r, 1027 1038 1080 1122 g, 990 1035 1254 1376 r, 1195 1258 1354 1436 r, 1344 1357 1395 1408 r,
1384 1398 1417 1425 r, 1349 1398 1409 1419 g, 1200 1208 1395 1419 g, 1162 1208 1227 1235 r`;

const FourHourChart = () => (
  <Chart
    view={[33, 43, 1056, 1447]}
    axis={985}
    floor={1439}
    floorTo={1089}
    header="@NG - 240 min  NYMEX  L=3.720  0.050  1.36%  B=3.719  A=3"
    scale={scaleOf('4.000@97 3.950@298 3.900@500 3.850@700 3.800@903 3.750@1103 3.700@1304')}
    tags={[['3.720', 1230, RED]]}
    times={[['6/13', 85], ['6/16', 229], ['6/18', 313], ['6/20', 457], ['6/23', 601], ['6/25', 685], ['6/27', 829]].map(t => [...t, 1471])}
    ticks={[85, 157, 229, 313, 385, 457, 529, 601, 685, 757, 829, 901]}
    notes={[['3.731', 975, 1157, BLUE, 'end']]}
  >
    <path stroke={BLUE} d="M33 82H978" />
    <Candles data={parseCandles(FOUR_HOUR, 37.5, 12)} width={9} hollowWidth={6} />
    <path stroke={BLUE} strokeWidth="2" d="M33 1179H978" />
  </Chart>
);

// sparse session, so every bar starts with its own x
const FIVE_MIN = `
35 822 822 848 893 C, 42 822 825 860 876 c, 49 822 833 835 850 c, 57 822 825 833 853 c, 64 795 820 833 870 c,
71 770 795 803 820 c, 79 741 770 795 827 c, 86 741 757 808 822 C, 93 780 782 822 853 C, 100 820 822 833 850 c,
108 822 822 835 870 r, 115 822 822 845 862 h, 123 767 822 833 850 c, 130 820 822 853 878 r, 138 795 822 853 870 c,
145 820 835 850 855 r, 152 822 822 825 838 h, 160 822 822 838 853 r, 167 822 835 850 862 h, 174 835 850 905 920 r,
181 870 880 905 922 r, 189 822 825 880 880 c, 197 770 780 822 850 c, 204 711 780 784 798 c, 211 770 782 784 795 c,
219 780 795 797 800 c, 226 782 795 797 800 c, 233 808 810 838 840 C, 248 808 809 811 811 C, 256 822 822 823 823 C,
263 822 822 823 823 C, 270 822 822 823 823 C, 278 822 823 866 880 r, 285 862 866 868 876 h, 293 866 868 890 893 r,
300 866 868 890 893 r, 308 876 880 893 893 r, 315 880 893 905 905 h, 322 906 906 907 907 r, 330 876 880 893 893 h,
337 880 882 895 900 r, 344 878 880 908 920 h, 352 893 895 920 930 r, 359 893 905 910 935 r, 366 852 908 920 950 h,
373 920 922 950 978 r, 381 920 925 947 950 h, 388 920 922 934 950 h, 403 906 908 918 920 r, 410 906 908 918 920 r,
425 920 935 960 965 r, 440 934 936 962 965 h, 455 948 950 962 964 h, 462 920 934 948 964 r, 469 934 936 962 964 h,
484 905 906 918 922 c, 491 893 895 907 918 c, 499 918 919 921 921 C, 506 934 936 962 964 r, 521 930 945 950 955 c,
528 918 920 934 936 c, 535 907 918 934 934 c, 543 920 934 950 962 r, 550 930 932 944 950 h, 558 950 951 963 964 r,
572 946 948 962 964 h, 580 948 950 962 964 r, 594 934 948 950 952 c, 602 918 919 921 921 C, 609 918 919 921 921 C,
623 918 919 921 921 C, 630 918 919 921 921 C, 645 880 882 950 950 c, 652 880 882 934 950 C, 660 948 950 958 962 h,
667 930 946 950 962 r, 674 922 936 948 950 h, 682 905 908 948 950 h, 689 822 845 907 908 c, 697 838 850 853 867 c,
704 851 852 854 868 c, 711 806 810 822 824 C, 718 808 810 822 824 C, 726 767 780 808 810 c, 733 740 757 767 780 c,
741 755 757 767 780 C, 748 765 766 780 795 c, 755 753 755 780 782 c, 763 741 742 757 782 C, 770 741 742 782 784 C,
778 795 796 808 810 C, 785 770 772 774 780 C, 792 767 769 782 784 c, 800 766 768 780 782 c, 807 795 797 851 853 h,
814 837 850 867 880 r, 821 865 867 905 908 r, 829 908 922 934 936 r, 836 918 922 935 936 h, 844 935 936 937 937 r,
851 893 895 920 922 r, 859 880 890 905 908 r, 866 880 895 905 908 h, 873 878 880 893 905 r, 880 808 810 880 882 c,
888 738 742 808 820 c, 895 728 741 760 762 C, 902 752 770 822 840 C, 910 795 797 838 852 c, 917 795 797 936 938 C,
925 892 908 936 938 r, 932 892 895 896 897 r, 939 862 868 890 893 h, 947 782 784 852 865 c, 954 767 768 780 808 c,
961 727 740 768 770 c, 968 644 672 768 768 c, 976 644 658 672 698 c, 983 615 630 660 672 c, 990 630 645 658 660 c,
998 657 658 700 712 C, 1005 670 672 698 712 C, 1012 670 672 712 725 C, 1020 727 740 768 780 r, 1027 740 768 782 795 r,
1035 755 780 795 808 r, 1042 780 795 835 838 h, 1049 820 822 836 838 r, 1057 695 698 808 811 c, 1064 644 685 795 797 C,
1071 780 795 878 908 r, 1079 877 880 905 908 r, 1086 877 880 907 908 r, 1093 892 895 907 908 h, 1101 877 895 960 965 r,
1108 838 852 962 964 h, 1115 850 852 866 880 c, 1123 838 868 940 960 r, 1130 864 868 948 950 h, 1138 767 770 880 880 c,
1145 598 615 782 784 c, 1152 600 628 685 698 C, 1160 588 600 698 712 C, 1167 533 575 600 602 c, 1174 545 600 628 630 C,
1182 625 630 698 742 C, 1189 575 600 698 700 c, 1197 505 530 602 615 c, 1204 500 530 532 545 c, 1211 462 478 490 520 c,
1219 462 480 490 562 C, 1226 478 490 545 548 c, 1233 462 465 545 548 C, 1241 475 490 520 545 C, 1248 488 505 520 548 C,
1255 500 505 535 575 c, 1263 392 420 490 492 c, 1270 350 380 420 422 c, 1278 240 255 380 382 c, 1285 210 240 270 282 C,
1292 228 255 282 323 c, 1299 210 242 270 282 C, 1307 87 157 255 257 c, 1314 157 158 282 295 C, 1321 225 240 270 282 c,
1329 157 198 228 240 c, 1336 127 185 268 282 C, 1344 268 269 295 310 r`;
const VOLUME = '1303 1349 1400 1390 1327 1217g 1333 1403 1371 1400y 1360 1390 1360 1368 1384 1406y 1437y 1437y 1379r 1403 1419 1419 1427 1430 1437y 1437*2 1437y 1437*5 1422r 1437 1437*7 1427 1433r 1433 1419g 1411r 1437*5 1437r 1437*3 1431*4 1437 1437g 1437*3 1422r 1437*3 1437y 1437*7 1430g 1437*6 1411g 1437*5 1417 1427 1430 1437 1433 1422 1431 1437*2 1437y 1437 1419m 1437*6 1427r 1437*3 1430g 1437 1437g 1431 1437 1430g 1437r 1431r 1437y 1430r 1437 1427 1437r 1417g 1420 1422 1357g 1417 1411 1420 1430 1430y 1437 1419 1427*3 1427 1427g 1419g 1406r 1425 1425 1422 1387r 1417g 1427 1430 1425 1376g 1379g 1408 1371 1373 1417 1411 1422 1357 1395 1406 1403 1414 1384 1411 1384 1300m 1303g 1284 1298g 1279r 1260 1308 1022g 1200 1254 1292 1135r 1400y';

// the volume list skips a few quiet slots, so it is anchored on the newest bar
const volumeCount = VOLUME.split(' ').reduce((n, t) => n + Number(t.split('*')[1] || 1), 0);

const FiveMinChart = () => (
  <Chart
    view={[31, 48, 1500, 1447]}
    axis={1432}
    floor={1442}
    floorTo={1531}
    header="@NG - 5 min  NYMEX  L=3.720  0.050  1.36%  B=3.719  A=3.720  O=3.681  Hi=3.735  Lo=3.671  V=10,273  TTM Tre"
    scale={scaleOf('3.735@87 3.730@157 3.725@225 3.715@365 3.710@435 3.700@573 3.695@644 3.690@712 3.685@782 3.680@852 3.675@919 700.00@1090 500.00@1190 300.00@1287 100.00@1385')}
    tags={[['3.720', 300, RED], ['3.705', 508, YELLOW], ['3.689', 738, RED], ['3.672', 968, YELLOW], ['76.00', 1403, YELLOW]]}
    times={[['16:00', 80], ['18:00', 195], ['20:00', 342], ['22:00', 462], ['6/26', 601], ['2:00', 758], ['4:00', 934], ['6:00', 1110], ['8:00', 1287]].map(t => [...t, 1473])}
    ticks={[80, 195, 342, 462, 601, 755, 932, 1108, 1285]}
    notes={[
      ['3.723', 1421, 236, YELLOW, 'end'], ['3.720', 1425, 277, '#fff', 'end'],
      ['Hubert Senters Climactic Volume (true,10,green,red,magenta,yellow,darkgray)', 34, 1003, '#fff'], ['76.00', 980, 1003, YELLOW],
    ]}
  >
    <Candles data={parseCandles(FIVE_MIN, 35, 7.35)} width={7} hollowWidth={5} />
    <path stroke={YELLOW} d="M31 255H1426" />
    <path stroke="#fff" d="M31 296H1426" />
    <Dots step={7.35} color={ORANGE} runs={[[35, 847, 242], [851, 851, 866], [859, 874, 839], [851, 851, 950], [859, 874, 963], [880, 880, 698], [888, 888, 561], [895, 910, 531], [917, 962, 517], [968, 976, 352], [983, 1095, 295], [1101, 1138, 268], [1145, 1153, 242], [1160, 1160, 211], [1167, 1189, 101]]} />
    <Dots step={7.35} color={YELLOW} runs={[[851, 851, 893], [859, 874, 880], [888, 888, 741], [895, 962, 725], [968, 976, 644], [983, 1140, 615], [1145, 1153, 600], [1160, 1160, 588], [1167, 1190, 533], [1197, 1344, 503], [851, 912, 920], [917, 1098, 937], [1101, 1344, 963]]} />
    <Dots step={7.35} color={RED} runs={[[859, 874, 903], [888, 888, 830], [895, 910, 823], [917, 962, 831], [968, 976, 790], [983, 1095, 774], [1101, 1138, 790], [1145, 1153, 782], [1160, 1160, 774], [1167, 1190, 747], [1197, 1344, 733]]} />
    <Bars text={VOLUME} x0={1342 - (volumeCount - 1) * 7.35} step={7.35} base={1439} color="#808080" width={2} />
  </Chart>
);

// runs of line-break blocks: colour, first x, last x, start y, end y
const BLOCKS = `
r 48 90 827 935, g 96 96 920 880, g 102 126 880 814, r 132 132 827 867, r 138 150 867 921, g 156 156 895 840,
g 162 216 840 706, r 222 222 718 760, g 228 240 718 664, g 246 246 664 624, g 252 264 624 584, r 270 270 597 637,
r 276 282 637 692, g 288 288 664 584, g 294 318 584 516, r 324 324 530 570, r 330 342 570 611, g 348 348 597 557,
g 354 360 557 530, r 366 366 543 611, r 372 408 611 718, g 414 414 706 664, g 420 486 664 491, r 492 492 505 543,
g 498 498 505 478, g 504 510 478 451, r 516 516 465 516, r 522 528 516 543, g 534 534 530 451, r 540 540 530 557,
g 546 546 530 438, g 552 648 438 207, r 654 654 222 262, r 660 678 262 316, g 684 684 303 262, g 690 762 262 87,
r 768 768 100 140, r 774 798 140 208, g 804 804 195 153, r 810 810 195 222, r 816 840 222 289, g 846 846 276 235,
g 852 882 235 153, r 888 888 166 208, r 894 894 208 222, g 900 900 208 140, g 906 906 140 127, r 912 912 140 235,
r 918 942 235 303`;

const VALUE_LINES = [
  [LIME, '42,1265 50,1280 58,1290'], [YELLOW, '62,1320 63,1335 70,1328 74,1342 80,1330 88,1345 92,1310 92,1300 98,1296'],
  [LIME, '98,1296 115,1262 120,1256 126,1268 128,1262'],
  [YELLOW, '128,1262 130,1298 138,1294 145,1302 150,1316'], [LIME, '153,1290 153,1255 160,1240 175,1205 190,1180 205,1150 213,1138 219,1180 224,1125'],
  [YELLOW, '228,1122 234,1108 240,1100 245,1072 252,1066 258,1074 263,1064 267,1090 273,1100 280,1130'],
  [RED, '285,1095 285,1020 289,1014 293,1026 297,1012 301,1026 305,1014 309,1028 313,1020 317,1032'],
  [YELLOW, '320,1045 322,1078 330,1082 334,1074 341,1086 341,1076'], [RED, '344,1055 344,1018 349,1010 353,1026 357,1014 360,1032'],
  [YELLOW, '362,1050 363,1110 368,1118'],
  [LIME, '370,1120 378,1150 388,1190 398,1210 405,1232 410,1215 411,1188 420,1176 430,1172 430,1156 440,1158 450,1148 460,1134 468,1118'],
  [YELLOW, '470,1118 476,1106 482,1114 488,1104 489,1142 496,1096 502,1104 508,1092 511,1100 513,1145'],
  [LIME, '516,1148 522,1158 528,1165'], [YELLOW, '531,1160 531,1085'],
  [LIME, '536,1160 538,1187 540,1165'], [YELLOW, '543,1160 543,1076 550,1080 556,1070 562,1080 568,1070 575,1082 586,1070 598,1038'],
  [RED, '602,1005 603,992 609,984 615,996 618,986 625,1008 631,1000 637,1014 645,1008 650,1018 651,1046'],
  [YELLOW, '655,1045 658,1056 662,1024'],
  [YELLOW, '668,1035 670,1052 676,1056 678,1078 681,1044 686,1056 692,1044 698,1054 704,1044 710,1054 718,1042'],
  [RED, '722,1030 723,1016 728,1028 733,1014 738,1026 743,1012 748,1022 753,1008 758,1018 762,1004 765,1055'],
  [YELLOW, '768,1056 774,1076 780,1080 785,1090 790,1114 798,1116 801,1096 802,1130'],
  [LIME, '794,1135 803,1130 810,1162 815,1175 826,1208 838,1235 843,1222 843,1195 852,1186 862,1170 880,1152 884,1195 893,1210 897,1138 905,1126 908,1225 918,1240 930,1262 940,1276 950,1272'],
];

const blockPath = (color) => BLOCKS.trim().split(/\s*,\s*/).map(r => r.split(' ')).filter(r => r[0] === color).map(r => {
  const [a, b, y0, y1] = r.slice(1).map(Number);
  const n = (b - a) / 6 + 1;
  const dy = (y1 - y0) / n;
  let d = '';
  for (let i = 0; i < n; i++) d += `M${a + i * 6} ${y0 + i * dy}V${y0 + (i + 1) * dy}`;
  return d;
}).join('');

const LineBreakChart = () => (
  <Chart
    view={[42, 41, 1070, 1400]}
    axis={1015}
    floor={1388}
    floorTo={1112}
    splits={[944]}
    header="@NG - 3 LB, 1 tick  NYMEX  L=3.720  0.050  1.36%  B=3.719  A="
    scale={scaleOf('3.735@84 3.730@152 3.725@219 3.715@355 3.710@422 3.705@489 3.700@555 3.695@622 3.690@690 3.685@757 3.680@825 3.675@892 10.00@981 6.00@1071 2.00@1160 -2.00@1249 -6.00@1338')}
    tags={[['3.720', 292, '#ff8080'], ['-2.95', 1276, LIME]]}
    times={[['7:12', 530, 1420]]}
    ticks={[286, 526, 766]}
    notes={[
      ['3.731', 1006, 120, '#fff', 'end'], ['3.720', 1006, 268, '#fff', 'end'],
      ['TTM Value Chart Alrt (50,8,Red,4,yellow,-4,yellow,-8,red,930,60 ...', 45, 965, '#fff'],
    ]}
  >
    <path stroke={LIME} strokeWidth="2" d={blockPath('g')} />
    <path stroke={RED} strokeWidth="2" d={blockPath('r')} />
    <path stroke="#fff" d="M42 139H1008M42 288H1008" />
    <path stroke={RED} d="M46 1028H945M46 1383H945" />
    <path stroke={YELLOW} d="M46 1118H945M46 1293H945" />
    {VALUE_LINES.map(([c, pts]) => <polyline key={pts} points={pts} stroke={c} strokeWidth="2" />)}
  </Chart>
);

const ScrollBar = styled.div`
  height: 18px;
  flex: none;
  display: flex;
  align-items: center;
  justify-content: space-between;
  padding: 0 6px 0 5px;
  background: #ececec;
`;

const ScrollThumb = styled.button`
  width: 15px;
  height: 14px;
  margin-left: auto;
  margin-right: 8px;
  border: 1px solid #989898;
  border-radius: 2px;
  background: linear-gradient(#f6f6f6 50%, #d6d6d6 50%);
`;

const ScrollArrow = styled.button`
  width: 7px;
  height: 12px;
  border: 0;
  background: none;
  display: flex;
  align-items: center;
`;

const Arrow = ({ dir, w = 7, h = 5, color = '#000' }) => {
  const d = { up: `M0 ${h}H${w}L${w / 2} 0z`, down: `M0 0H${w}L${w / 2} ${h}z`, left: `M${w} 0V${h}L0 ${h / 2}z`, right: `M0 0V${h}L${w} ${h / 2}z` }[dir];
  return <svg width={w} height={h} aria-hidden="true"><path d={d} fill={color} /></svg>;
};

/* ---------- time and sales ---------- */

const SalesFrame = styled.section`
  min-width: 0;
  min-height: 0;
  display: flex;
  flex-direction: column;
  padding: 0 6px 10px ${p => p.$pad}px;
  background: #f2f6fd;
  font-family: "Liberation Serif", "Times New Roman", serif;
  font-size: 18px;
`;

const SymbolBox = styled.div`
  flex: none;
  height: 19px;
  line-height: 19px;
  text-align: center;
  background: ${p => (p.$head ? '#f0f0f0' : '#fff')};
  border-bottom: 1px solid ${p => (p.$head ? '#909090' : '#fff')};
  border-top: 1px solid ${p => (p.$head ? '#606060' : '#fff')};
  overflow: hidden;
`;

const SalesWell = styled.div`
  flex: 1;
  min-height: 0;
  margin: 5px 2px 0 0;
  background: #fff;
  border-top: 2px solid #808080;
  border-left: 1px solid #808080;
  overflow: hidden;
`;

const SalesHead = styled.th`
  height: 23px;
  text-align: center;
  background: #f0f0f0;
  border-right: 1px solid #a0a0a0;
`;

const SaleCell = styled.td`
  height: 18px;
  line-height: 17px;
  padding: ${p => (p.$size ? '0 7px 0 0' : '0 0 0 4px')};
  text-align: ${p => (p.$size ? 'right' : 'left')};
  color: ${p => p.$color};
  background: ${p => p.$bg};
`;

const sale = (row) => {
  const [price, size, tone] = row.split(' ');
  const flag = price.slice(-1);
  const white = tone === 'w';
  const color = { g: '#00b400', r: '#b40000', R: '#f00000', w: '#000' }[tone];
  const bg = white ? '#fff' : '#000';
  const marked = flag === '+' || flag === '-';
  return { price, size, color, bg, priceColor: marked ? '#fff' : color, priceBg: flag === '+' ? '#008000' : flag === '-' ? '#800000' : bg };
};

const TimeAndSales = ({ rows, sizeBg, strip, pad }) => (
  <SalesFrame $pad={pad}>
    <Strip $height={strip}>
      <StripPart $w={34} $color="#c0cddb" />
      <StripPart $w={29} $color="#00ff00" $edged />
    </Strip>
    <SymbolBox $head>Symbol</SymbolBox>
    <SymbolBox>@NG</SymbolBox>
    <SalesWell>
      <table>
        <colgroup><col style={{ width: '60%' }} /><col /></colgroup>
        <thead><tr><SalesHead>Price</SalesHead><SalesHead>S...</SalesHead></tr></thead>
        <tbody>
          {rows.map((r, i) => {
            const s = sale(r);
            return (
              <tr key={i}>
                <SaleCell $color={s.priceColor} $bg={s.priceBg}>{s.price}</SaleCell>
                <SaleCell $size $color={s.color} $bg={sizeBg ? (s.bg === '#fff' ? '#e4e4e4' : '#1a1a1a') : s.bg}>{s.size}</SaleCell>
              </tr>
            );
          })}
        </tbody>
      </table>
    </SalesWell>
  </SalesFrame>
);

const SALES_TOP = [
  '3.72 1 g', '3.72 1 g', '3.72+ 1 g', '3.719 1 r', '3.719 1 r', '3.719 2 r', '3.719- 1 r', '3.72 1 g', '3.72 1 w',
  '3.72+ 1 g', '3.719 1 r', '3.719- 1 r', '3.72 2 g', '3.72 1 r', '3.72 1 r', '3.72 1 r', '3.72 1 r', '3.72 1 r',
  '3.72 1 r', '3.72 1 r', '3.72 7 r', '3.72 6 r', '3.72 1 r', '3.72 1 r', '3.72- 1 r',
];
const SALES_BOTTOM = [
  '3.721 18 R', '3.726 23 g', '3.729 12 w', '3.726 10 g', '3.729 16 w', '3.73 14 g', '3.723 10 w', '3.723 15 w',
  '3.723 15 w', '3.723 15 w', '3.723 14 w', '3.722 11 w', '3.723 16 g', '3.723+ 25 g', '3.726 16 w', '3.724 37 w',
  '3.725 10 g', '3.721 10 g', '3.721 10 g', '3.719 10 g', '3.718 11 r', '3.717 15 w', '3.715 21 w', '3.705 15 w', '3.706 27 w',
];

/* ---------- matrix ---------- */

const MatrixFrame = styled.section`
  min-width: 0;
  min-height: 0;
  display: flex;
  flex-direction: column;
  padding: 0 9px 9px 8px;
  background: #f2f6fd;
`;

const QuoteTable = styled.table`
  flex: none;
  border-top: 1px solid #606060;
  border-left: 1px solid #808080;
`;

const QuoteCell = styled.td`
  height: 17px;
  text-align: center;
  color: ${p => (p.$green ? '#008000' : '#000')};
  background: ${p => (p.$head ? '#f0f0f0' : '#fff')};
  border-right: 1px solid ${p => (p.$head ? '#a0a0a0' : '#fff')};
  border-bottom: 1px solid #a0a0a0;
`;

const MatrixWell = styled.div`
  flex: 1;
  min-height: 0;
  overflow: hidden;
  background: #000;
  border-left: 1px solid #808080;
`;

const MatrixHead = styled.th`
  height: 26px;
  background: #f0f0f0;
  border-right: 1px solid #a0a0a0;
`;

const MatrixCell = styled.td`
  height: 14px;
  line-height: 13px;
  text-align: ${p => (p.$bars ? 'left' : 'center')};
  color: ${p => p.$color || '#000'};
  background: ${p => p.$bg};
  border-right: 1px solid #333;
  border-bottom: 1px solid #333;
  box-shadow: ${p => (p.$mark === 'top' ? 'inset 0 1px #00ff00' : p.$mark === 'right' ? 'inset -2px 0 #00c800' : 'none')};
`;

const VolBar = styled.i`
  display: block;
  height: 13px;
`;

const StatusLine = styled.div`
  height: 19px;
  flex: none;
  padding-left: 4px;
  line-height: 18px;
  white-space: pre;
  overflow: hidden;
  background: #f0f0f0;
  border-left: 1px solid #808080;
  font-family: "Open Sans", "Noto Sans", sans-serif;
`;

const MATRIX_TOP = 3756;
const MATRIX_BIDS = ['15  (2)', '33  (2)', 22, 23, 29, 25, 21, 54, 29, 21];
const MATRIX_ASKS = [21, 31, 21, 32, 30, 23, 16, '30  (2)', '8  (2)', 19];
const MATRIX_VOLUME = [
  6, 16, 13, 13, 31, 30, 33, 25, 35, 35, 50, 50, 37, 26, 23, 13, 7, 6, 6, 10, 11, 12, 6, 5, 11, 2, 4, 13, 14, 19, 27, 17,
  14, 14, 8, 4, 7, 8, 9, 11, 7, 8, 13, 10, 8, 3, 15, 7, 12, 19, 10,
];

const volFill = (i) => {
  const t = i / 50;
  const near = Math.round(215 - 190 * t * t * t);
  const far = Math.round(240 - 115 * t);
  return `linear-gradient(90deg, rgb(${near},${Math.round(252 - 22 * t)},${near}), rgb(${far},255,${far}))`;
};

const Matrix = () => (
  <MatrixFrame>
    <Strip $height={9}><StripPart $w={180} $color="#c0cddb" /></Strip>
    <QuoteTable>
      <colgroup><col style={{ width: 63 }} /><col style={{ width: 50 }} /><col style={{ width: 50 }} /><col /></colgroup>
      <tbody>
        <tr><QuoteCell as="th" $head>Symbol</QuoteCell><QuoteCell as="th" $head>Last</QuoteCell><QuoteCell as="th" $head>Net Chg</QuoteCell><QuoteCell as="th" $head /></tr>
        <tr><QuoteCell>@NG</QuoteCell><QuoteCell $green>3.72</QuoteCell><QuoteCell $green>0.05</QuoteCell><QuoteCell /></tr>
      </tbody>
    </QuoteTable>
    <MatrixWell>
      <table>
        <colgroup><col style={{ width: 36 }} /><col style={{ width: 34 }} /><col style={{ width: 35 }} /><col style={{ width: 53 }} /><col /></colgroup>
        <thead>
          <tr><MatrixHead>Bid...</MatrixHead><MatrixHead>Pri...</MatrixHead><MatrixHead>As...</MatrixHead><MatrixHead>Vol Bars</MatrixHead><MatrixHead /></tr>
        </thead>
        <tbody>
          {Array.from({ length: 73 }, (_, i) => {
            const p = MATRIX_TOP - i;
            const bid = MATRIX_BIDS[3719 - p];
            const ask = MATRIX_ASKS[3729 - p];
            const last = p === 3720;
            const vol = MATRIX_VOLUME[3734 - p];
            return (
              <tr key={p}>
                <MatrixCell $bg={bid ? '#3366ff' : '#000080'} $color={p === 3719 ? '#fff' : '#000'}>{bid}</MatrixCell>
                <MatrixCell
                  $bg={last ? '#d0d010' : p > 3735 ? '#808080' : '#000'}
                  $color={last || p > 3735 ? '#000' : p === 3712 ? CYAN : '#fff'}
                  $mark={last ? 'right' : p === 3735 ? 'top' : undefined}
                >
                  {(p / 1000).toFixed(3)}
                </MatrixCell>
                <MatrixCell $bg={ask ? RED : '#800000'} $color={last ? '#fff' : '#000'}>{ask}</MatrixCell>
                <MatrixCell $bars $bg="#000">{vol && <VolBar style={{ width: vol, background: volFill(3734 - p) }} />}</MatrixCell>
                <MatrixCell $bg="#000" />
              </tr>
            );
          })}
        </tbody>
      </table>
    </MatrixWell>
    <StatusLine>{'<Connected> LIVE:  Connected'}</StatusLine>
  </MatrixFrame>
);

/* ---------- order ticket ---------- */

const Ticket = styled.section`
  position: absolute;
  top: 75px;
  right: 2px;
  bottom: 18px;
  width: 265px;
  display: flex;
  flex-direction: column;
  padding: 0 7px 6px 6px;
  border: 1px solid #1c1c1c;
  border-radius: 7px;
  background: linear-gradient(#d8d5cb, #f6f3e6 18px, #cfccc3 34px, #e8e4d8 52px, #1a1a1a 76px, #060606 40%, #1a1a1a calc(100% - 40px), #f2ead2 calc(100% - 20px));
  box-shadow: inset 0 0 0 1px #aaa9a2, 0 0 5px rgba(0, 0, 0, 0.8);
`;

const TicketTitle = styled.header`
  height: 29px;
  flex: none;
  display: flex;
  gap: 6px;
  padding: 5px 0 0 1px;
  font-family: "Open Sans", "Noto Sans", sans-serif;

  h2 {
    flex: 1;
    margin: 0;
    padding-top: 1px;
    font-size: 11px;
    font-weight: normal;
    white-space: nowrap;
  }
`;

const TicketCaption = styled.div`
  display: flex;
  height: 19px;
  margin-top: -5px;
  border: 1px solid #77756f;
  border-top: 0;
  border-radius: 0 0 4px 4px;

  button {
    width: 28px;
    border: 0;
    border-right: 1px solid #8b8982;
    background: linear-gradient(rgba(255, 255, 255, 0.5), rgba(190, 188, 180, 0.5));
  }

  button:last-child {
    width: 45px;
    border-right: 0;
  }
`;

const TicketBody = styled.div`
  flex: 1;
  min-height: 0;
  display: flex;
  flex-direction: column;
  background: #f0f0f0;
  border: 1px solid #8c8c8c;
  border-width: 1px 0 0 1px;
  overflow: hidden;
`;

const TabStrip = styled.div`
  height: 20px;
  flex: none;
  display: flex;
  border-bottom: 1px solid #808080;
`;

const TabButton = styled.button`
  width: ${p => p.$w}px;
  flex: none;
  display: flex;
  align-items: center;
  justify-content: ${p => (p.$end ? 'flex-end' : 'center')};
  border: 0;
  border-right: ${p => (p.$open ? 0 : '1px')} solid #909090;
  background: ${p => (p.$on ? '#dcdcf6' : '#f0f0f0')};
`;

const AccountRow = styled.div`
  flex: none;
  height: 27px;
  display: flex;
  align-items: center;
  justify-content: space-between;
  padding: 0 4px 3px 10px;

  span {
    display: flex;
    width: 183px;
    height: 19px;
    padding: 1px;
    background: #fff;
    border: 1px solid #808080;
  }

  select {
    flex: 1;
    min-width: 0;
    appearance: none;
    border: 0;
    outline: 0;
    color: #fff;
    background: #3399ff;
    font-size: 11px;
  }
`;

const DropArrow = styled.b`
  width: 15px;
  display: flex;
  align-items: center;
  justify-content: center;
  background: #f0f0f0;
  border: 1px solid #a0a0a0;
`;

const Controls = styled.div`
  flex: none;
  height: 119px;
  display: flex;
`;

const ControlColumn = styled.div`
  width: 165px;
  display: flex;
  flex-direction: column;
  gap: 4px;
`;

const ControlRow = styled.div`
  display: flex;
  align-items: center;
  height: ${p => p.$h}px;
  padding-left: ${p => p.$pad || 0}px;
  gap: ${p => p.$gap || 0}px;

  label {
    width: 11px;
    text-align: right;
    margin-right: 3px;
    font-size: 12px;
  }
`;

const Spin = styled.input`
  width: ${p => p.$w}px;
  height: ${p => p.$h}px;
  text-align: right;
  border: 1px solid #808080;
  background: ${p => p.$bg || '#fff'};
  font-size: ${p => (p.$h > 16 ? 14 : 12)}px;
`;

const Box = styled.button`
  width: ${p => p.$w}px;
  height: ${p => p.$h}px;
  flex: none;
  margin-left: ${p => (p.$join ? '-1px' : 0)};
  display: flex;
  flex-direction: column;
  align-items: center;
  justify-content: ${p => (p.$spread ? 'space-evenly' : 'center')};
  border: 1px solid #808080;
  background: ${p => (p.$on ? '#dcdcf6' : '#f0f0f0')};
  font-weight: bold;
  font-size: ${p => p.$size || 12}px;
`;

const Money = styled.dl`
  margin: 0 0 0 1px;
  flex: 1;
  display: grid;
  grid-template-columns: 35px 25px auto;
  grid-auto-rows: 17px;
  white-space: nowrap;

  dd, dt {
    margin: 0;
  }
`;

const PriceBar = styled.div`
  height: ${p => p.$h}px;
  flex: none;
  display: grid;
  grid-template-columns: ${p => p.$columns};
  font-size: 12px;

  > * {
    display: flex;
    align-items: center;
    justify-content: center;
  }
`;

const WhiteCell = styled.output`
  background: #fff;
  color: ${p => (p.$green ? '#008000' : '#000')};
  gap: 5px;
`;

const BarButton = styled.button`
  border: 1px solid #808080;
  background: #ececec;
`;

const Lamp = styled.i`
  width: 15px;
  height: 15px;
  border-radius: 4px;
  border: 1px solid #0a5a0a;
  background: radial-gradient(circle at 35% 30%, #6ff06f, #10a010 60%, #067006);
`;

const LadderHead = styled.th`
  height: 20px;
  font-size: ${p => (p.$blue ? 15 : 12)}px;
  font-weight: ${p => (p.$blue ? 'bold' : 'normal')};
  color: ${p => (p.$blue ? BLUE : '#000')};
  text-align: center;
  border-right: 1px solid #a0a0a0;
  border-bottom: 1px solid #a0a0a0;
`;

const LadderCell = styled.td`
  height: 18px;
  line-height: 17px;
  padding-left: ${p => (p.$total ? 9 : 0)}px;
  font-size: 12px;
  color: ${p => p.$color || '#2b2b2b'};
  text-align: center;
  background: ${p => p.$bg || '#f0f0f0'};
  border-right: 1px solid #f0f0f0;
  border-bottom: 1px solid #f0f0f0;
  box-shadow: ${p => (p.$flag ? 'inset -2px 0 #00e000' : 'none')};
`;

const OFFERS = [21, 31, 21, 32, 33, 23, 16, 27, 7, 19];
const BIDS = [13, 30, 22, 23, 29, 24, 21, 54, 29, 21];
const TOTALS = [
  2, 54, 142, 121, 102, 269, 254, 288, 211, 309, 303, 375, 463, 313, 213, 219, 109, 64, 51, 55, 92, 98, 102, 56, 43, 98,
  18, 42, 111, 123, 166, 236, 151, 125, 126, 75, 40, 64, 69, 79,
];

const SpinButtons = ({ h, w = 18 }) => (
  <Box $w={w} $h={h} $join $spread aria-label="Step">
    <Arrow dir="up" w={6} h={3} />
    <Arrow dir="down" w={6} h={3} />
  </Box>
);

const OrderTicket = () => (
  <Ticket>
    <TicketTitle>
      <svg width="15" height="16" viewBox="0 0 15 16" aria-hidden="true">
        <path d="M1 4l6-2v12l-6-4z" fill="#d8786c" />
        <path d="M7 2l7-1v9l-7 4z" fill="#7a9fc0" />
        <path d="M1 7l6-1M1 9l6 1M9 4l4-1M9 7l4-1" stroke="#fff" />
      </svg>
      <h2>SIM:Natural Gas - Au...</h2>
      <TicketCaption>
        <button aria-label="Minimize"><svg width="12" height="10"><path d="M1 4h10v3H1z" fill="#fff" stroke="#555" /></svg></button>
        <button aria-label="Maximize"><svg width="12" height="10"><path d="M1 1h10v8H1zM4 4h4v2H4z" fill="#fff" stroke="#555" /></svg></button>
        <button aria-label="Close"><svg width="12" height="10"><path d="M2 1l8 8M10 1l-8 8" stroke="#555" strokeWidth="4" /><path d="M2 1l8 8M10 1l-8 8" stroke="#fff" strokeWidth="2" /></svg></button>
      </TicketCaption>
    </TicketTitle>
    <TicketBody>
      <TabStrip>
        <TabButton $w={20} aria-label="Properties">
          <svg width="16" height="15" viewBox="0 0 16 15"><path d="M1 4h10v10H1z" fill="#fff" stroke="#333" /><path d="M3 7h6M3 9h6M3 11h6M6 4l4-3h5v5l-4 2" fill="none" stroke="#333" /></svg>
        </TabButton>
        <TabButton $w={19} $open aria-label="Chart">
          <svg width="15" height="15" viewBox="0 0 15 15"><path d="M1 3l11-2 2 10-10 3z" fill="#3a9ae0" /><path d="M3 9l3-3 2 2 4-4M4 12l9-2" fill="none" stroke="#fff" /></svg>
        </TabButton>
        <TabButton $w={12} aria-label="Chart options"><Arrow dir="down" w={5} h={3} /></TabButton>
        <TabButton $w={21}>SP</TabButton>
        <TabButton $w={12} aria-label="Spreads"><Arrow dir="down" w={5} h={3} /></TabButton>
        <TabButton $w={54}>Jul13</TabButton>
        <TabButton $w={55} $on>Aug13</TabButton>
        <TabButton $w={25} $end>Se</TabButton>
        <TabButton $w={16} aria-label="Previous months"><Arrow dir="left" w={4} h={7} /></TabButton>
        <TabButton $w={16} aria-label="Next months"><Arrow dir="right" w={4} h={7} /></TabButton>
      </TabStrip>
      <AccountRow>
        <label htmlFor="account">Account:</label>
        <span>
          <select id="account"><option>sam007 (Practice - Not Reviewed)</option></select>
          <DropArrow><Arrow dir="down" w={6} h={4} /></DropArrow>
        </span>
      </AccountRow>
      <Controls>
        <ControlColumn>
          <ControlRow $h={15} $pad={18}>
            <label htmlFor="limit">L:</label><Spin id="limit" $w={37} $h={15} $bg="#ffffdc" defaultValue="1" /><SpinButtons h={15} />
            <Box $w={19} $h={15} $join aria-label="Limit presets"><Arrow dir="down" w={11} h={6} /></Box>
          </ControlRow>
          <ControlRow $h={15} $pad={18}>
            <label htmlFor="reverse">R:</label><Spin id="reverse" $w={37} $h={15} defaultValue="2" /><SpinButtons h={15} />
            <Box $w={19} $h={15} $join aria-label="Reverse presets"><Arrow dir="down" w={11} h={6} /></Box>
          </ControlRow>
          <ControlRow $h={24} $pad={33} $gap={9}>
            <Box $w={23} $h={23} aria-label="Center">
              <svg width="20" height="20"><path d="M1 1h18v18H1z" fill="#fff" stroke="#e00000" strokeWidth="2" /><path d="M4 5h5v5H4z" fill="#00f" /><path d="M11 5h5v5h-5z" fill="#f00" /><path d="M4 12h12M6 16h8l-4-4z" stroke="#000" /></svg>
            </Box>
            <ControlRow $h={24}>
              <Box $w={25} $h={23} $size={21}>S</Box>
              <Box $w={25} $h={23} $size={14} $join>SL</Box>
              <Box $w={12} $h={23} $join aria-label="Stop options"><Arrow dir="down" w={7} h={4} /></Box>
              <Box $w={25} $h={23} $join $on aria-label="Auto">
                <svg width="21" height="20" viewBox="0 0 21 20"><path d="M1 18l5-12 5 12M3 14h6" fill="none" stroke="#e8601c" strokeWidth="2" /><circle cx="12" cy="3" r="2" fill="none" stroke="#e8601c" /><circle cx="16" cy="10" r="2" fill="none" stroke="#e8601c" /><circle cx="17" cy="16" r="2" fill="none" stroke="#e8601c" /></svg>
              </Box>
              <Box $w={12} $h={23} $join aria-label="Auto options"><Arrow dir="down" w={7} h={4} /></Box>
            </ControlRow>
          </ControlRow>
          <ControlRow $h={19} $pad={35}>
            <label htmlFor="long">L:</label><Spin id="long" $w={35} $h={18} defaultValue="31" /><SpinButtons h={18} />
          </ControlRow>
          <ControlRow $h={20} $pad={2}>
            <Box $w={24} $h={24} aria-label="Cancel all">
              <svg width="20" height="20"><circle cx="10" cy="10" r="8" fill="#fff" stroke="#e00000" strokeWidth="2" /><path d="M6 6l8 8M14 6l-8 8" stroke="#000" strokeWidth="2" /></svg>
            </Box>
            <ControlRow $h={19} $pad={9}>
              <label htmlFor="short">S:</label><Spin id="short" $w={35} $h={19} defaultValue="8" /><SpinButtons h={19} />
            </ControlRow>
            <ControlRow $h={19} $pad={4}><Box $w={19} $h={19} $size={17}>T</Box></ControlRow>
          </ControlRow>
        </ControlColumn>
        <Money>
          <dt>Net:</dt><dd>0</dd><dd>(0-0)</dd>
          <dt>UP&amp;L:</dt><dd>0.00</dd><dd />
          <dt>P&amp;L:</dt><dd>0.00</dd><dd />
        </Money>
      </Controls>
      <PriceBar $h={20} $columns="63px 39px 88px 1fr">
        <WhiteCell>3735</WhiteCell>
        <BarButton aria-label="Swap"><svg width="16" height="16"><path d="M8 0h8v8H8z" fill="#f00" /><path d="M0 8h8v8H0z" fill="#00f" /></svg></BarButton>
        <BarButton aria-label="Scroll up"><Arrow dir="up" w={16} h={8} /></BarButton>
        <WhiteCell $green><Lamp />Open</WhiteCell>
      </PriceBar>
      <table>
        <colgroup>
          <col style={{ width: 27 }} /><col style={{ width: 36 }} /><col style={{ width: 84 }} />
          <col style={{ width: 33 }} /><col style={{ width: 27 }} /><col />
        </colgroup>
        <thead>
          <tr>
            <LadderHead>My B</LadderHead><LadderHead>Bid</LadderHead><LadderHead $blue>+50</LadderHead>
            <LadderHead>Offer</LadderHead><LadderHead>My O</LadderHead><LadderHead>Total</LadderHead>
          </tr>
        </thead>
        <tbody>
          {Array.from({ length: 47 }, (_, i) => {
            const p = 3742 - i;
            const bid = BIDS[3719 - p];
            const offer = OFFERS[3729 - p];
            const priceBg = p === 3735 ? '#fff' : p === 3720 ? '#00ff00' : '#f0f0f0';
            return (
              <tr key={p}>
                <LadderCell $bg="#e2e1dd" />
                <LadderCell $bg={bid ? '#0078b0' : '#e2e1dd'}>{bid}</LadderCell>
                <LadderCell $bg={priceBg} $color={p === 3735 ? BLUE : undefined}>{p === 3720 ? '3720 / 1' : p}</LadderCell>
                <LadderCell $bg={offer ? '#ff6060' : '#e2e1dd'}>{offer}</LadderCell>
                <LadderCell $bg="#e2e1dd" />
                <LadderCell $total $flag={p === 3723}>{TOTALS[3735 - p]}</LadderCell>
              </tr>
            );
          })}
        </tbody>
      </table>
      <PriceBar $h={19} $columns="63px 122px 1fr">
        <WhiteCell>3671</WhiteCell>
        <BarButton aria-label="Scroll down"><Arrow dir="down" w={18} h={9} /></BarButton>
        <WhiteCell>10273</WhiteCell>
      </PriceBar>
    </TicketBody>
  </Ticket>
);

/* ---------- workspace tabs ---------- */

const TabBar = styled.footer`
  height: 17px;
  flex: none;
  display: flex;
  background: #f0f0f0;
  border-top: 1px solid #000;
  font-size: 12px;
`;

const NavButton = styled.button`
  width: 17px;
  display: flex;
  align-items: center;
  justify-content: center;
  border: 1px solid;
  border-color: #fff #a0a0a0 #a0a0a0 #fff;
  background: #f0f0f0;
`;

const WorkspaceTab = styled.button`
  padding: 0 8px;
  border: 0;
  background: ${p => (p.$on ? '#fff' : '#f0f0f0')};
  font-weight: ${p => (p.$on ? 'bold' : 'normal')};
  white-space: nowrap;
`;

const Slant = ({ before, after, last }) => (
  <svg width="7" height="16" viewBox="0 0 7 16" aria-hidden="true" style={{ flex: 'none' }}>
    <path d="M0 0h7L4 16H0z" fill={before ? '#fff' : '#f0f0f0'} />
    <path d="M0 0h7v16H5z" fill={after ? '#fff' : '#f0f0f0'} />
    <path d={last ? 'M7 0L2 16' : 'M0 0l6 16M7 4L2 16'} fill="none" stroke="#000" />
  </svg>
);

const TABS = ['$NG', '$NG2', '$EC Trade It!', '$Bigger Picture NG', '$5 min Energies', '$NG ORBS', 'Trade Manager', 'Weekly', '$Financials', '$Swing'];

const App = () => (
  <Page>
    <GlobalStyle />
    <TitleBar>
      <svg width="14" height="16" viewBox="0 0 14 16" aria-hidden="true">
        <path d="M1 9Q0 2 6 1q7-1 7 4 0 5-5 9l-4 1q4-4 4-8-1-3-4-1-1 2 0 3z" fill="#1a7ae0" />
        <path d="M3 8q0-4 3-5" fill="none" stroke="#8fd0ff" />
      </svg>
      <TitleText>TradeStation 9.0 - $Trade it! - $NG2</TitleText>
      <CaptionButton aria-label="Minimize"><svg width="12" height="8"><path d="M1 3h10v3H1z" fill="#fff" stroke="#445" /></svg></CaptionButton>
      <CaptionButton aria-label="Restore"><svg width="12" height="12"><path d="M4 1h7v7H4zM1 4h7v7H1z" fill="#fff" stroke="#445" /></svg></CaptionButton>
      <CaptionButton aria-label="Close" $close><svg width="12" height="10"><path d="M2 1l8 8M10 1l-8 8" stroke="#633" strokeWidth="4" /><path d="M2 1l8 8M10 1l-8 8" stroke="#fff" strokeWidth="2" /></svg></CaptionButton>
    </TitleBar>
    <MenuBar>
      {['File', 'Edit', 'View', 'Insert', 'Format', 'Drawing', 'Window', 'Help'].map(m => <MenuItem key={m}>{m}</MenuItem>)}
    </MenuBar>
    <Toolbar />
    <Workspace>
      <Rows>
        <WindowRow $columns="minmax(0, 376fr) minmax(0, 628fr) minmax(0, 374fr) 114px">
          <ChartWindow margin="0 0 1px 2px"><DailyChart /></ChartWindow>
          <ChartWindow margin="0 0 2px 2px" strip={6} caption={208}><HourChart /></ChartWindow>
          <ChartWindow margin="0 1px 1px 0"><TickChart /></ChartWindow>
          <TimeAndSales rows={SALES_TOP} pad={5} strip={9} />
        </WindowRow>
        <WindowRow $columns="minmax(0, 374fr) minmax(0, 631fr) minmax(0, 375fr) 112px">
          <ChartWindow margin="0 2px 3px 2px" strip={7}><FourHourChart /></ChartWindow>
          <ChartWindow margin="2px 1px 1px 0" caption={208}><FiveMinChart /></ChartWindow>
          <ChartWindow margin="0 0 3px 0" strip={6} active>
            <LineBreakChart />
            <ScrollBar>
              <ScrollArrow aria-label="Scroll left"><Arrow dir="left" w={4} h={7} /></ScrollArrow>
              <ScrollThumb aria-label="Scroll position" />
              <ScrollArrow aria-label="Scroll right"><Arrow dir="right" w={4} h={7} /></ScrollArrow>
            </ScrollBar>
          </ChartWindow>
          <TimeAndSales rows={SALES_BOTTOM} sizeBg pad={4} strip={8} />
        </WindowRow>
      </Rows>
      <Matrix />
    </Workspace>
    <TabBar>
      {['left', 'left', 'right', 'right'].map((d, i) => (
        <NavButton key={i} aria-label={`Tabs ${d}`}>
          {i === 0 && <svg width="2" height="7"><path d="M0 0h1v7H0z" fill="#777" /></svg>}
          <Arrow dir={d} w={4} h={7} color="#777" />
          {i === 3 && <svg width="2" height="7"><path d="M1 0h1v7H1z" fill="#777" /></svg>}
        </NavButton>
      ))}
      {TABS.map((t, i) => (
        <React.Fragment key={t}>
          <Slant before={TABS[i - 1] === '$NG2'} after={t === '$NG2'} />
          <WorkspaceTab $on={t === '$NG2'}>{t}</WorkspaceTab>
        </React.Fragment>
      ))}
      <Slant last />
    </TabBar>
    <OrderTicket />
  </Page>
);

export default App;
